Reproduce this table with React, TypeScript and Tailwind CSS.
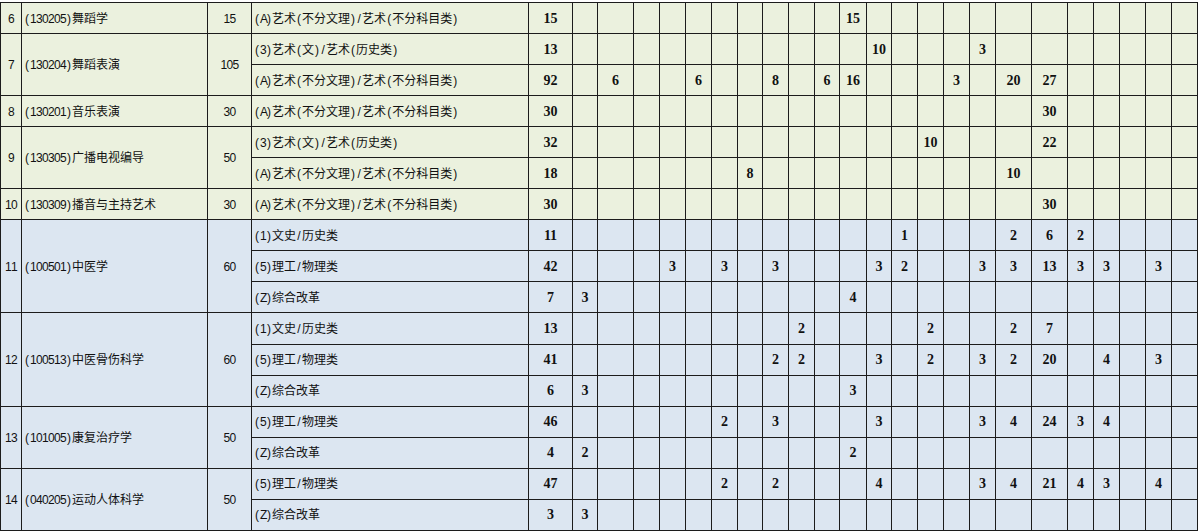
import type { FC, ReactNode } from "react";

type SubRow = { cat: string; total: number; cells: Record<number, number> };
type Major = { no: number; name: string; plan: number; tone: "green" | "blue"; rows: SubRow[] };

const ART_A = "(A)艺术(不分文理)/艺术(不分科目类)";
const ART_3 = "(3)艺术(文)/艺术(历史类)";
const WEN = "(1)文史/历史类";
const LI = "(5)理工/物理类";
const ZH = "(Z)综合改革";

// widths of the 23 province columns after the total column
const DATA_COLS = [25, 36, 26, 26, 26, 26, 25, 26, 26, 25, 27, 25, 26, 26, 26, 26, 36, 36, 26, 26, 26, 26, 26];

const majors: Major[] = [
  { no: 6, name: "(130205)舞蹈学", plan: 15, tone: "green", rows: [{ cat: ART_A, total: 15, cells: { 11: 15 } }] },
  {
    no: 7,
    name: "(130204)舞蹈表演",
    plan: 105,
    tone: "green",
    rows: [
      { cat: ART_3, total: 13, cells: { 12: 10, 16: 3 } },
      { cat: ART_A, total: 92, cells: { 2: 6, 5: 6, 8: 8, 10: 6, 11: 16, 15: 3, 17: 20, 18: 27 } },
    ],
  },
  { no: 8, name: "(130201)音乐表演", plan: 30, tone: "green", rows: [{ cat: ART_A, total: 30, cells: { 18: 30 } }] },
  {
    no: 9,
    name: "(130305)广播电视编导",
    plan: 50,
    tone: "green",
    rows: [
      { cat: ART_3, total: 32, cells: { 14: 10, 18: 22 } },
      { cat: ART_A, total: 18, cells: { 7: 8, 17: 10 } },
    ],
  },
  { no: 10, name: "(130309)播音与主持艺术", plan: 30, tone: "green", rows: [{ cat: ART_A, total: 30, cells: { 18: 30 } }] },
  {
    no: 11,
    name: "(100501)中医学",
    plan: 60,
    tone: "blue",
    rows: [
      { cat: WEN, total: 11, cells: { 13: 1, 17: 2, 18: 6, 19: 2 } },
      { cat: LI, total: 42, cells: { 4: 3, 6: 3, 8: 3, 12: 3, 13: 2, 16: 3, 17: 3, 18: 13, 19: 3, 20: 3, 22: 3 } },
      { cat: ZH, total: 7, cells: { 1: 3, 11: 4 } },
    ],
  },
  {
    no: 12,
    name: "(100513)中医骨伤科学",
    plan: 60,
    tone: "blue",
    rows: [
      { cat: WEN, total: 13, cells: { 9: 2, 14: 2, 17: 2, 18: 7 } },
      { cat: LI, total: 41, cells: { 8: 2, 9: 2, 12: 3, 14: 2, 16: 3, 17: 2, 18: 20, 20: 4, 22: 3 } },
      { cat: ZH, total: 6, cells: { 1: 3, 11: 3 } },
    ],
  },
  {
    no: 13,
    name: "(101005)康复治疗学",
    plan: 50,
    tone: "blue",
    rows: [
      { cat: LI, total: 46, cells: { 6: 2, 8: 3, 12: 3, 16: 3, 17: 4, 18: 24, 19: 3, 20: 4 } },
      { cat: ZH, total: 4, cells: { 1: 2, 11: 2 } },
    ],
  },
  {
    no: 14,
    name: "(040205)运动人体科学",
    plan: 50,
    tone: "blue",
    rows: [
      { cat: LI, total: 47, cells: { 6: 2, 8: 2, 12: 4, 16: 3, 17: 4, 18: 21, 19: 4, 20: 3, 22: 4 } },
      { cat: ZH, total: 3, cells: { 1: 3 } },
    ],
  },
];

const cell = "border border-[#1c1c1c] p-0";
const textFont = "font-['Noto_Sans_CJK_SC',sans-serif] text-[12px] text-[#111]";
const numFont = "font-['Liberation_Serif','Noto_Sans_CJK_SC',serif] text-[14px] text-[#111]";

// half-width latin chars get a fixed 6px box, like the spreadsheet's CJK font
const Mixed: FC<{ text: string }> = ({ text }) => {
  const parts: ReactNode[] = [];
  Array.from(text).forEach((ch, i) => {
    if (ch.charCodeAt(0) < 0x2e80) {
      parts.push(
        <span key={i} className="inline-block w-[6px] text-center font-['Liberation_Sans',sans-serif] text-[12px]">
          {ch}
        </span>
      );
    } else {
      parts.push(ch);
    }
  });
  return <>{parts}</>;
};

const App: FC = () => {
  return (
    <div className="w-[1198px] h-[532px] overflow-hidden bg-white pt-[2px]">
      <table className="table-fixed border-collapse w-[1198px]">
        <colgroup>
          <col className="w-[21px]" />
          <col className="w-[186px]" />
          <col className="w-[44px]" />
          <col className="w-[277px]" />
          <col className="w-[44px]" />
          {DATA_COLS.map((w, i) => (
            <col key={i} style={{ width: w }} />
          ))}
        </colgroup>
        <tbody>
          {majors.map((m) => {
            const bg = m.tone === "green" ? "bg-[#ebf1de]" : "bg-[#dce6f1]";
            return m.rows.map((r, ri) => (
              <tr key={`${m.no}-${ri}`} className={`h-[31.05px] ${bg}`}>
                {ri === 0 && (
                  <>
                    <td rowSpan={m.rows.length} className={`${cell} ${textFont} text-center`}>
                      <Mixed text={String(m.no)} />
                    </td>
                    <td rowSpan={m.rows.length} className={`${cell} ${textFont} pl-[2px] whitespace-nowrap`}>
                      <Mixed text={m.name} />
                    </td>
                    <td rowSpan={m.rows.length} className={`${cell} ${textFont} text-center`}>
                      <Mixed text={String(m.plan)} />
                    </td>
                  </>
                )}
                <td className={`${cell} ${textFont} pl-[2px] whitespace-nowrap`}>
                  <Mixed text={r.cat} />
                </td>
                <td className={`${cell} ${numFont} font-bold text-center`}>{r.total}</td>
                {DATA_COLS.map((_, ci) => (
                  <td key={ci} className={`${cell} ${numFont} font-bold text-center`}>
                    {r.cells[ci + 1] ?? ""}
                  </td>
                ))}
              </tr>
            ));
          })}
        </tbody>
      </table>
    </div>
  );
};

export default App;
